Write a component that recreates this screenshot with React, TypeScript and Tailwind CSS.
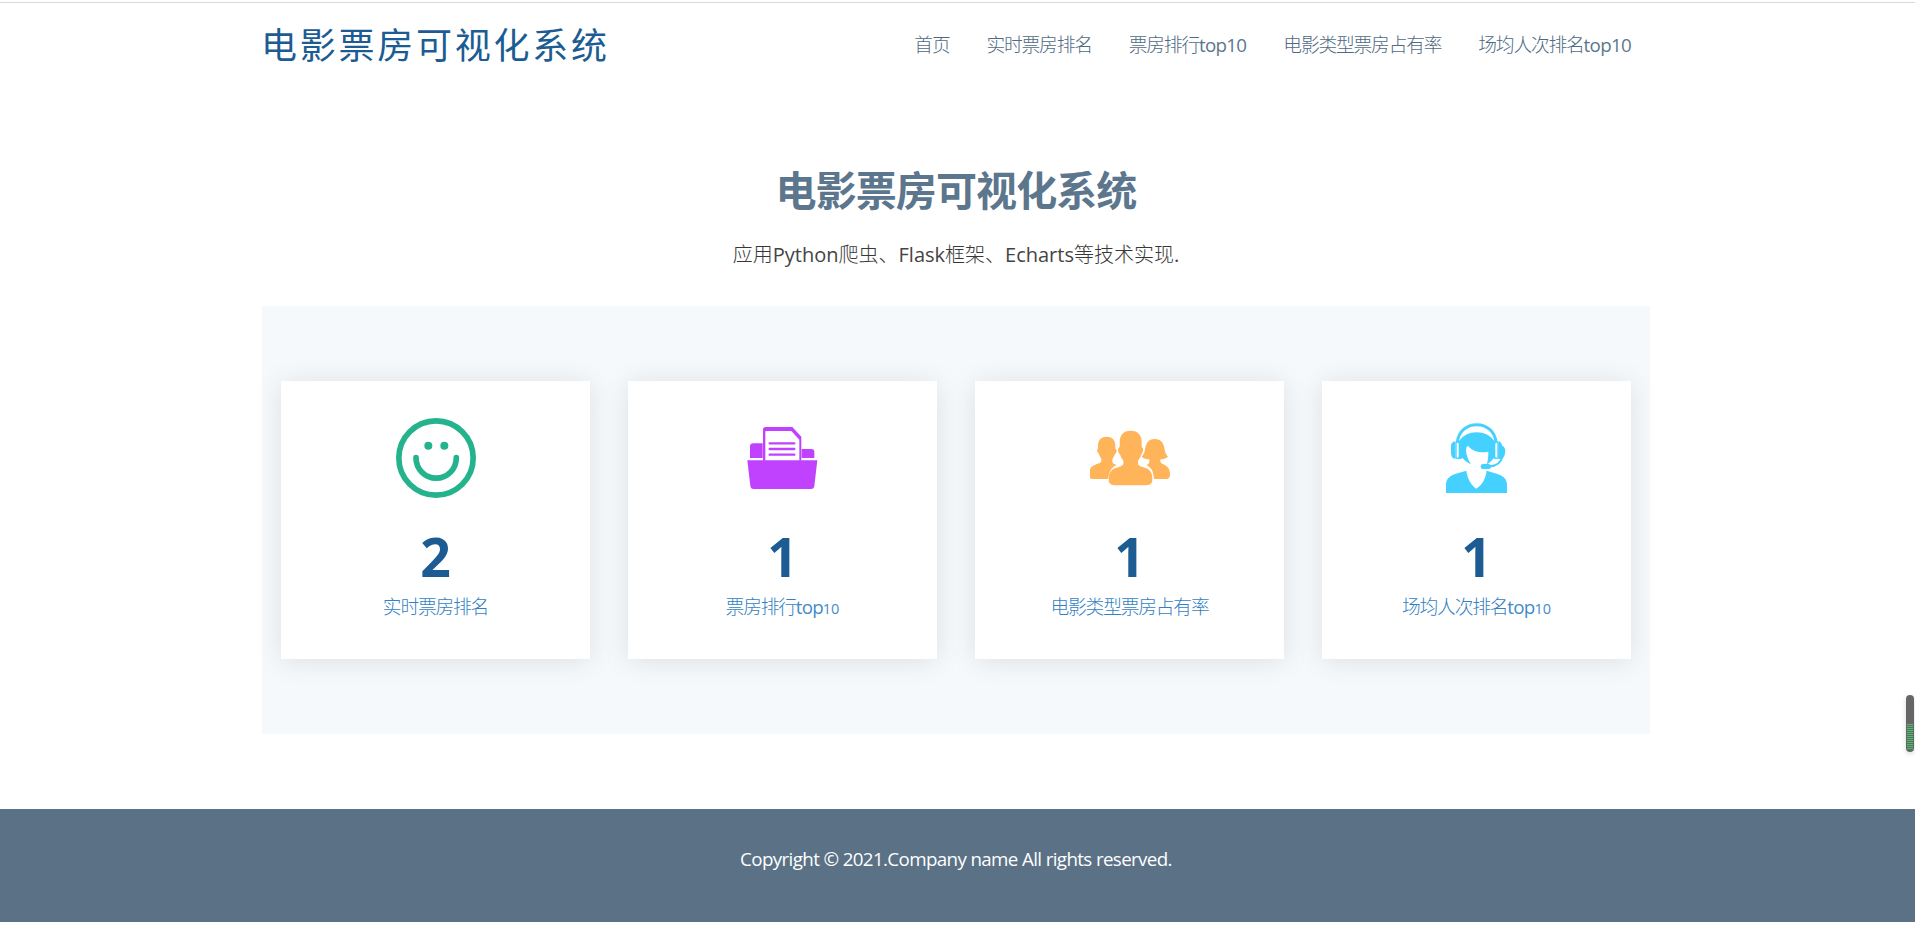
import type { ReactNode } from "react";

interface Service {
  icon: ReactNode;
  count: number;
  label: string;
  digits?: string;
}

const navItems = [
  "首页",
  "实时票房排名",
  "票房排行top10",
  "电影类型票房占有率",
  "场均人次排名top10",
];

const services: Service[] = [
  { icon: <SmileIcon />, count: 2, label: "实时票房排名" },
  { icon: <FolderIcon />, count: 1, label: "票房排行top", digits: "10" },
  { icon: <UsersIcon />, count: 1, label: "电影类型票房占有率" },
  { icon: <SupportIcon />, count: 1, label: "场均人次排名top", digits: "10" },
];

export default function App() {
  return (
    <div className="relative h-[938px] w-full overflow-hidden bg-white font-['Open_Sans','Noto_Sans_CJK_SC',sans-serif] text-[#444444]">
      <Header />
      <main className="ml-[262px] w-[1388px]">
        <section className="flex h-[213px] flex-col items-center pt-[73px]">
          <h1 className="text-[41px] leading-[48px] font-bold tracking-[-0.9px] text-[#5c768d]">
            电影票房可视化系统
          </h1>
          <p className="mt-[26px] text-[20px] leading-[30px] font-light text-[#383838]">
            <MixedText
              text="应用Python爬虫、Flask框架、Echarts等技术实现."
              latinClass="font-normal text-[#444444]"
            />
          </p>
        </section>
        <section className="grid h-[428px] grid-cols-4 gap-[38px] bg-[#f5f9fc] px-[19px] py-[75px]">
          {services.map((service) => (
            <ServiceCard key={service.label} {...service} />
          ))}
        </section>
      </main>
      <footer className="mt-[75px] flex h-[113px] justify-center bg-[#5a7186] pt-[36px] text-[18.75px] leading-[28px] tracking-[-0.625px] text-white">
        <p className="mr-[3px]">
          Copyright © 2021.Company name All rights reserved.
        </p>
      </footer>
      <ScrollMeter />
    </div>
  );
}

// Latin runs get their own weight and tracking, Chinese keeps the parent's
function MixedText({ text, latinClass }: { text: string; latinClass: string }) {
  return (
    <>
      {text.split(/([\w.]+)/).map((part, i) =>
        i % 2 === 1 ? (
          <span key={i} className={latinClass}>
            {part}
          </span>
        ) : (
          part
        ),
      )}
    </>
  );
}

function Header() {
  return (
    <header className="mt-[2px] flex h-[91px] justify-between border-t border-[#d9d9d9] pr-[284px] pl-[261px]">
      <div className="pt-[21px] text-[36px] leading-[44px] tracking-[2.75px] text-[#1c5c93]">
        电影票房可视化系统
      </div>
      <nav className="flex gap-[37px] pt-[28px] text-[18.75px] leading-[28px] font-light tracking-[-1.2px] text-[#4f6a82]">
        {navItems.map((item) => (
          <a key={item}>
            <MixedText
              text={item}
              latinClass="font-normal tracking-[-0.7px] text-[#5c768d]"
            />
          </a>
        ))}
      </nav>
    </header>
  );
}

function ServiceCard({ icon, count, label, digits }: Service) {
  return (
    <div className="flex flex-col items-center bg-white pt-[37px] shadow-[0_2px_26px_rgba(0,0,0,0.1)]">
      {icon}
      <span className="mt-[29px] text-[53.5px] leading-[60px] font-bold text-[#1c5c93]">
        {count}
      </span>
      <span className="mt-[6px] text-[18.75px] leading-[28px] font-light tracking-[-1.2px] text-[#337fc2]">
        <MixedText
          text={label}
          latinClass="font-normal tracking-[-0.8px] text-[#428bca]"
        />
        {digits && (
          <span className="text-[14.5px] font-normal tracking-normal text-[#428bca]">
            {digits}
          </span>
        )}
      </span>
    </div>
  );
}

function SmileIcon() {
  return (
    <svg className="size-20" viewBox="47 54 240 240" fill="none">
      <circle cx="167" cy="174" r="111.5" stroke="#24b38c" strokeWidth="17" />
      <path
        d="M107 173a60.500 61.500 0 0 0 121 0"
        stroke="#24b38c"
        strokeWidth="17"
        strokeLinecap="round"
      />
      <circle cx="144" cy="137" r="12" fill="#24b38c" />
      <circle cx="192" cy="137" r="12" fill="#24b38c" />
    </svg>
  );
}

function FolderIcon() {
  return (
    <svg className="size-20" viewBox="40 24 240 240" fill="#c042ff">
      <path d="M53 151h210l-9 77q-1 9-10 9H72q-9 0-10-9z" />
      <path d="M61 144v-34q0-10 10-10h28v44zM216 144v-27h29q9 0 9 9v18z" />
      <path
        fillRule="evenodd"
        d="M100 152V59q0-8 8-8h80l27 29v72h-6V89l-24-26h-76q-2 0-2 2v87z"
      />
      <path
        d="M120 100h74M120 117h74M120 134h74"
        stroke="#c042ff"
        strokeWidth="7"
        strokeLinecap="round"
      />
    </svg>
  );
}

function UsersIcon() {
  return (
    <svg className="size-20" viewBox="45 8 240 240" fill="#ffb459">
      <path d="M95 64c15 0 26 10 26 26v10c5 0 5 12-1 16-2 7-6 11-8 16v8c3 6 8 7 13 8-14 7-22 16-26 43H53c-7-1-11-4-11-10 0-21 6-28 22-34 8-3 14-4 15-9v-8c-4-5-6-10-8-16-5-3-6-13-2-16V90c0-16 11-26 26-26z" />
      <path d="M239 71c21 0 27 14 30 31 1 9 4 16 10 22-7 6-14 8-23 8v7c3 10 29 7 29 37 0 11-4 15-13 15h-35c-2-25-8-34-23-42 6-2 8-4 9-9v-8c-9 0-17-2-23-8 6-6 9-13 10-22 3-17 9-31 29-31z" />
      <path d="M167 46c22 0 33 14 33 34v16c7 0 5 17-1 21-2 8-5 13-10 19v10c2 9 23 9 34 18 7 7 9 16 9 29 0 10-4 15-18 17H119c-13-2-18-7-18-17 0-13 2-22 10-29 10-8 32-9 34-18v-10c-5-6-8-11-10-19-7-4-8-21-1-21V80c0-20 11-34 33-34z" />
    </svg>
  );
}

function SupportIcon() {
  return (
    <svg className="size-20" viewBox="21 24 240 240" fill="#45d1ff">
      <path
        d="M82 96c4-31 27-52 58-52s54 21 58 52"
        fill="none"
        stroke="#45d1ff"
        strokeWidth="9"
      />
      <path d="M87 93q18-26 53-26t53 26v48q-8 15-23 22 5-13 5-38-38 8-62-18-10 10 0 36 4 12 10 20-21-10-30-25z" />
      <path d="M76 94q-13 2-13 14v21q0 16 13 18z" />
      <rect x="76" y="94" width="21" height="53" rx="5" />
      <rect x="190" y="94" width="16" height="53" rx="5" />
      <path d="M205 94q9 1 11 12 10 6 10 18-1 15-10 23h-11z" />
      <path
        d="M83 101v39M199 101v39"
        stroke="white"
        strokeWidth="6"
        strokeLinecap="round"
      />
      <path
        d="M218 138q-7 30-40 31"
        fill="none"
        stroke="#45d1ff"
        strokeWidth="6"
      />
      <rect x="152" y="162" width="31" height="15" rx="7.5" />
      <path d="M48 249v-25c0-24 20-30 40-36l21-6c3 25 16 45 30 54 16-10 28-29 31-54l20 6c20 6 41 12 41 36v25z" />
    </svg>
  );
}

function ScrollMeter() {
  return (
    <div className="absolute top-[695px] right-px flex h-[57px] w-[8px] flex-col justify-end overflow-hidden rounded-full bg-[#666666] px-px pb-[2px] shadow-[0_2px_5px_rgba(0,0,0,0.15)]">
      <div className="h-[26px] bg-[repeating-linear-gradient(#42c466_0_1px,#666666_1px_2px)]" />
    </div>
  );
}
